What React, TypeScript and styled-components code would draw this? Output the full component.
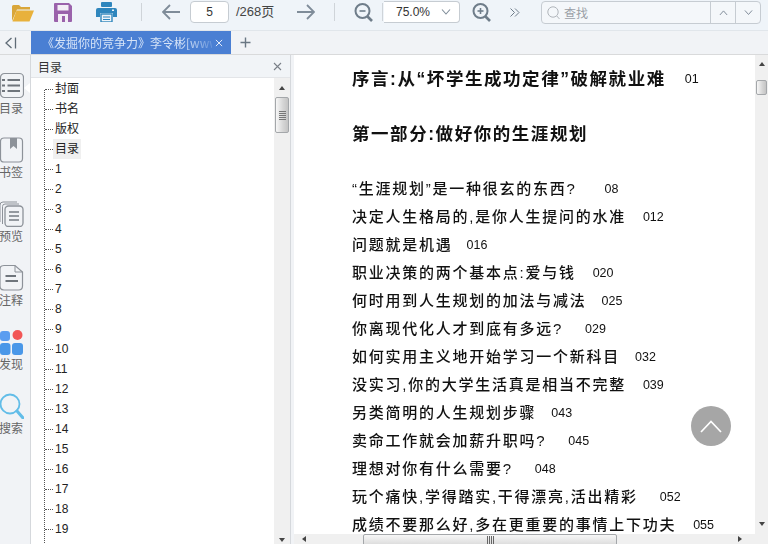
import React from "react";
import styled, { createGlobalStyle } from "styled-components";

const Global = createGlobalStyle`
  html, body { margin: 0; padding: 0; background: #f1f3f6; }
  body { font-family: "Liberation Sans", "Noto Sans CJK SC", sans-serif; overflow: hidden; }
  * { box-sizing: border-box; }
`;

const Page = styled.div`
  width: 768px; height: 544px; display: flex; flex-direction: column; overflow: hidden; position: relative;
`;
const Toolbar = styled.div`
  height: 30px; flex: none; background: #eff4f9; display: flex; align-items: flex-start; position: relative;
`;
const ToolIcon = styled.span<{ $l: number; $w: number }>`
  display: flex; align-items: center; justify-content: center; flex: none; height: 24px;
  margin-left: ${p => p.$l}px; width: ${p => p.$w}px;
`;
const Sep = styled.span<{ $l: number }>`
  flex: none; width: 1px; height: 18px; margin-top: 3px; margin-left: ${p => p.$l}px; background: #cfd4d9;
`;
const PageInput = styled.div`
  flex: none; width: 39px; height: 22px; margin: 1px 0 0 10px; background: #fff; border: 1px solid #c6ccd2; border-radius: 4px;
  font-size: 12px; color: #333; display: flex; align-items: center; justify-content: center;
`;
const PageTotal = styled.span`
  flex: none; width: 38px; margin: 4px 0 0 7px; font-size: 13px; line-height: 15px; color: #444; white-space: nowrap;
  font-family: "Liberation Sans", "Noto Sans CJK SC", sans-serif;
`;
const ZoomSelect = styled.div`
  flex: none; width: 76px; height: 22px; margin: 1px 0 0 1px; background: #fff; border: 1px solid #c6ccd2; border-radius: 0 4px 4px 0;
  border-left: none; font-size: 12px; color: #333; display: flex; align-items: center; padding-left: 12px; justify-content: space-between; padding-right: 8px;
`;
const SearchBox = styled.div`
  flex: none; width: 220px; height: 23px; margin: 1px 0 0 21px; border: 1px solid #c6ccd2; border-radius: 4px;
  background: #f4f7fa; display: flex; align-items: stretch;
`;
const SearchField = styled.div`
  flex: 1; display: flex; align-items: center; gap: 4px; padding-left: 5px; font-size: 12px; color: #9a9fa6;
`;
const SearchBtn = styled.div`
  flex: none; width: 25px; border-left: 1px solid #c6ccd2; display: flex; align-items: center; justify-content: center;
`;

const TabBar = styled.div`
  height: 25px; flex: none; background: #f1f3f6; border-top: 1px solid #e1e6eb; border-bottom: 1px solid #d9dadb; display: flex; align-items: stretch;
`;
const Collapse = styled.div`
  width: 31px; flex: none; display: flex; align-items: center; padding-left: 5px;
`;
const Tab = styled.div`
  width: 200px; flex: none; background: #4a7fd3; display: flex; align-items: center; padding-left: 11px; color: #d5e3f7;
  font-size: 12px; font-family: "Noto Sans CJK SC", sans-serif;
`;
const TabTitle = styled.span`
  width: 170px; overflow: hidden; white-space: nowrap; flex: none;
  -webkit-mask-image: linear-gradient(to right, #000 84%, rgba(0,0,0,.2) 100%);
  mask-image: linear-gradient(to right, #000 84%, rgba(0,0,0,.2) 100%);
`;
const TabClose = styled.span`
  display: flex; margin-left: 3px;
`;
const Plus = styled.div`
  margin-left: 9px; display: flex; align-items: center;
`;

const Body = styled.div`
  flex: 1; display: flex; min-height: 0; background: #f1f3f6;
`;
const Rail = styled.div`
  width: 31px; flex: none; border-right: 1px solid #d5d8dc; background: #f1f3f6; overflow: hidden; position: relative;
  display: flex; flex-direction: column; padding-top: 17px;
`;
const RailItem = styled.div`
  width: 22px; height: 64px; flex: none; display: flex; flex-direction: column; align-items: center;
`;
const RailIconBox = styled.div`
  width: 26px; height: 27px; flex: none; display: flex; align-items: center; justify-content: center;
`;
const RailLabel = styled.span`
  font-size: 12px; line-height: 16px; margin-top: 1px; color: #666; white-space: nowrap; font-family: "Noto Sans CJK SC", sans-serif;
`;
const Notch = styled.span`
  position: absolute; right: 0; top: 28px; width: 0; height: 0;
  border-top: 5px solid transparent; border-bottom: 5px solid transparent; border-right: 6px solid #fff;
`;

const Panel = styled.div`
  width: 260px; flex: none; display: flex; flex-direction: column; background: #fff; border-right: 1px solid #d5d8dc;
`;
const PanelHead = styled.div`
  height: 23px; flex: none; background: #f1f4f7; border-bottom: 1px solid #e3e5e8; display: flex; align-items: center; justify-content: space-between;
  padding: 0 8px 0 7px; font-size: 12px; color: #333; font-family: "Noto Sans CJK SC", sans-serif;
`;
const PanelBody = styled.div`
  flex: 1; display: flex; min-height: 0;
`;
const Tree = styled.div`
  flex: 1; padding: 1px 0 0 13px; overflow: hidden;
`;
const TreeList = styled.div`
  border-left: 1px dotted #555; position: relative; height: 480px;
  &::before { content: ""; position: absolute; left: -1px; top: 0; width: 1px; height: 10px; background: #fff; }
`;
const TreeRow = styled.div`
  height: 20px; display: flex; align-items: center;
`;
const Dash = styled.span`
  width: 8px; flex: none; border-top: 1px dotted #555;
`;
const TreeLabel = styled.span<{ $sel?: boolean }>`
  padding: 0 2px; height: 20px; line-height: 20px; font-size: 12px; color: #222;
  font-family: "Liberation Sans", "Noto Sans CJK SC", sans-serif; background: ${p => (p.$sel ? "#f0f0f0" : "transparent")};
`;
const VBar = styled.div`
  width: 16px; flex: none; background: #f0f0f0; display: flex; flex-direction: column; align-items: center; position: relative;
  justify-content: space-between; padding: 8px 0 2px;
`;
const Thumb = styled.span<{ $top: number; $h: number }>`
  position: absolute; left: 1px; right: 1px; top: ${p => p.$top}px; height: ${p => p.$h}px; border: 1px solid #a4a7aa; border-radius: 2px;
  background: linear-gradient(to right, #f7f7f7, #d5d5d5 60%, #c4c4c4); display: flex; align-items: center; justify-content: center;
`;
const Grip = styled.span`
  width: 7px; height: 9px;
  background: repeating-linear-gradient(to bottom, #777 0 1px, transparent 1px 2px);
`;
const ArrowUp = styled.span`
  width: 0; height: 0; border-left: 3.5px solid transparent; border-right: 3.5px solid transparent; border-bottom: 4px solid #444;
`;
const ArrowDown = styled.span`
  width: 0; height: 0; border-left: 3.5px solid transparent; border-right: 3.5px solid transparent; border-top: 4px solid #444;
`;
const ArrowLeft = styled.span`
  width: 0; height: 0; border-top: 3.5px solid transparent; border-bottom: 3.5px solid transparent; border-right: 4px solid #444;
`;
const ArrowRight = styled.span`
  width: 0; height: 0; border-top: 3.5px solid transparent; border-bottom: 3.5px solid transparent; border-left: 4px solid #444;
`;

const Viewer = styled.div`
  flex: 1; margin-left: 3px; display: flex; flex-direction: column; min-width: 0;
`;
const ViewerTop = styled.div`
  flex: 1; display: flex; min-height: 0;
`;
const Sheet = styled.div`
  flex: 1; background: #fff; padding: 8px 0 0 58px; overflow: hidden; color: #111; filter: blur(0.35px);
  font-family: "Liberation Sans", "Noto Sans CJK SC", sans-serif; min-width: 0;
`;
const Heading = styled.div`
  height: 28px; margin-bottom: 27px; display: flex; align-items: center; font-size: 17.5px; font-weight: 700; letter-spacing: 1.55px; white-space: nowrap;
`;
const Entry = styled.div`
  height: 28px; display: flex; align-items: center; font-size: 15px; font-weight: 500; letter-spacing: 1.75px; white-space: nowrap;
`;
const Num = styled.span<{ $gap: number }>`
  font-family: "Liberation Sans", sans-serif; font-size: 12.5px; font-weight: 400; letter-spacing: 0; margin-left: ${p => p.$gap}px; margin-top: 4px;
`;
const MainBar = styled.div`
  width: 13px; flex: none; background: #f0f0f0; display: flex; flex-direction: column; align-items: center; justify-content: space-between; padding: 7px 0 8px; position: relative;
`;
const HBar = styled.div`
  height: 10px; flex: none; background: #f0f0f0; display: flex; align-items: center; justify-content: space-between; padding: 0 26px 0 8px; position: relative; overflow: hidden;
`;
const HThumb = styled.span`
  position: absolute; left: 69px; top: 0; width: 254px; height: 16px; border: 1px solid #a4a7aa; border-radius: 2px;
  background: linear-gradient(to bottom, #f7f7f7, #d0d0d0); display: flex; justify-content: center; padding-top: 1px;
`;
const HGrip = styled.span`
  width: 7px; height: 8px; background: repeating-linear-gradient(to right, #666 0 1px, transparent 1px 2px);
`;
const TopButton = styled.div`
  position: absolute; left: 691px; top: 406px; width: 40px; height: 40px; border-radius: 50%; background: #a6a6a6; display: flex; align-items: center; justify-content: center;
`;

const chev = "#7f8c99";
const FolderIcon = () => (
  <svg width="24" height="21" viewBox="0 0 24 21">
    <path d="M1 4.5 Q1 3 2.5 3 H8 L10 5 H19 V7.5 H6 L1 19 Z" fill="#d9a63a" />
    <path d="M5.5 8.5 H23 L18.5 19.5 H1.5 Z" fill="#e8b13c" />
  </svg>
);
const SaveIcon = () => (
  <svg width="18" height="19" viewBox="0 0 18 19">
    <path d="M1 0 H15 L18 3 V18 a1 1 0 0 1 -1 1 H1 a1 1 0 0 1 -1 -1 V1 a1 1 0 0 1 1 -1 Z" fill="#9a62ab" />
    <rect x="3.5" y="2" width="11" height="5.5" fill="#f3eef6" />
    <rect x="4" y="11" width="10" height="8" fill="#f3eef6" />
    <rect x="8" y="13" width="3" height="6" fill="#9a62ab" />
  </svg>
);
const PrintIcon = () => (
  <svg width="21" height="20" viewBox="0 0 21 20">
    <rect x="5" y="0" width="11" height="5" rx="1" fill="#2f86bd" />
    <path d="M2 6 H19 a2 2 0 0 1 2 2 V15 H17 V11 H4 V15 H0 V8 a2 2 0 0 1 2 -2 Z" fill="#2f86bd" />
    <rect x="5" y="12" width="11" height="8" fill="none" stroke="#2f86bd" strokeWidth="1.4" />
    <path d="M7 15 H14 M7 17.5 H14" stroke="#2f86bd" strokeWidth="1" />
    <rect x="16" y="7.5" width="2" height="1.5" fill="#eaf3f8" />
  </svg>
);
const ArrowBack = () => (
  <svg width="18" height="16" viewBox="0 0 18 16" fill="none" stroke="#7f8c99" strokeWidth="1.8">
    <path d="M0.5 8 H18 M8 1 L1 8 L8 15" />
  </svg>
);
const ArrowFwd = () => (
  <svg width="18" height="16" viewBox="0 0 18 16" fill="none" stroke="#7f8c99" strokeWidth="1.8">
    <path d="M17.5 8 H0 M10 1 L17 8 L10 15" />
  </svg>
);
const ZoomIcon = ({ plus }: { plus?: boolean }) => (
  <svg width="19" height="19" viewBox="0 0 19 19" fill="none" stroke="#6f7d8a" strokeWidth="2">
    <circle cx="8.5" cy="8" r="7" />
    <path d="M13.5 13.5 L18 18" strokeWidth="2.6" />
    <path d="M5.5 8 H11.5" strokeWidth="1.6" />
    {plus && <path d="M8.5 5 V11" strokeWidth="1.6" />}
  </svg>
);
const Chevron = ({ up, size = 10, color = chev }: { up?: boolean; size?: number; color?: string }) => (
  <svg width={size} height={size * 0.6} viewBox="0 0 10 6" fill="none" stroke={color} strokeWidth="1.1">
    <path d={up ? "M1 5.5 L5 1 L9 5.5" : "M1 .5 L5 5 L9 .5"} />
  </svg>
);
const More = () => (
  <svg width="10" height="9" viewBox="0 0 10 9" fill="none" stroke="#6f7d8a" strokeWidth="1">
    <path d="M0.5 .5 L4.5 4.5 L.5 8.5 M5 .5 L9 4.5 L5 8.5" />
  </svg>
);
const SearchGlyph = () => (
  <svg width="13" height="14" viewBox="0 0 13 14" fill="none" stroke="#b0b5bb" strokeWidth="1">
    <circle cx="6" cy="6" r="5.2" />
    <path d="M9.8 10 L12.5 13" />
  </svg>
);
const CollapseIcon = () => (
  <svg width="12" height="12" viewBox="0 0 12 12" fill="none" stroke="#5f6b76" strokeWidth="1.3">
    <path d="M6.5 1 L1 6 L6.5 11 M10.5 0.5 V11.5" />
  </svg>
);
const Cross = ({ color, size = 9 }: { color: string; size?: number }) => (
  <svg width={size} height={size} viewBox="0 0 9 9" fill="none" stroke={color} strokeWidth="1.1">
    <path d="M1 1 L8 8 M8 1 L1 8" />
  </svg>
);
const PlusIcon = () => (
  <svg width="11" height="11" viewBox="0 0 11 11" fill="none" stroke="#6a7783" strokeWidth="1.4">
    <path d="M5.5 0.5 V10.5 M0.5 5.5 H10.5" />
  </svg>
);

const g = "#8d9299";
const TocIcon = () => (
  <svg width="26" height="27" viewBox="0 0 26 27" fill="none" stroke={g}>
    <rect x="2.5" y="1.5" width="23" height="24" rx="4" strokeWidth="1.2" />
    <path d="M9.5 8 H22 M9.5 13.5 H22 M9.5 19 H22" strokeWidth="1.8" stroke="#6f757c" />
    <path d="M4 8 H7 M4 13.5 H7 M4 19 H7" strokeWidth="1.8" stroke="#6f757c" />
  </svg>
);
const BookmarkIcon = () => (
  <svg width="26" height="27" viewBox="0 0 26 27" fill="none" stroke={g}>
    <rect x="2.5" y="2" width="22" height="24" rx="3.5" strokeWidth="1.2" />
    <path d="M12 2 H19 V13 L15.5 10 L12 13 Z" fill="#8d9299" stroke="none" />
  </svg>
);
const PreviewIcon = () => (
  <svg width="26" height="27" viewBox="0 0 26 27" fill="none" stroke={g}>
    <path d="M2 22 V5 Q2 2 5 2 H19" strokeWidth="1" />
    <path d="M4.5 24 V6.5 Q4.5 4 7 4 H21" strokeWidth="1" />
    <rect x="7" y="6" width="18" height="20.5" rx="3.5" strokeWidth="1.3" fill="#f1f3f6" />
    <path d="M11 12 H21 M11 16 H21 M11 20 H21" strokeWidth="1.6" stroke="#777d84" />
  </svg>
);
const NoteIcon = () => (
  <svg width="26" height="27" viewBox="0 0 26 27" fill="none" stroke={g}>
    <path d="M6 1.5 H17 L24.5 8 V22 Q24.5 26 20.5 26 H6 Q2 26 2 22 V5 Q2 1.5 6 1.5 Z" strokeWidth="1.2" />
    <path d="M17 1.5 V8 H24.5" strokeWidth="1" />
    <path d="M7.5 12 H18 M7.5 17 H20" strokeWidth="1.8" stroke="#6f757c" />
  </svg>
);
const DiscoverIcon = () => (
  <svg width="26" height="27" viewBox="0 0 26 27">
    <rect x="2" y="3" width="10" height="10" rx="3" fill="#5b9df0" />
    <circle cx="19.5" cy="7" r="5" fill="#f25656" />
    <rect x="2" y="15" width="10.5" height="12" rx="3" fill="#4a97e8" />
    <rect x="14" y="15" width="11" height="12" rx="3" fill="#4a97e8" />
  </svg>
);
const SearchRailIcon = () => (
  <svg width="26" height="27" viewBox="0 0 26 27" fill="none" stroke="#62bde8">
    <circle cx="12" cy="12" r="9.5" strokeWidth="1.8" />
    <path d="M19 19 L25 26" strokeWidth="3" strokeLinecap="round" />
  </svg>
);

const rail: [React.ReactNode, string][] = [
  [<TocIcon />, "目录"],
  [<BookmarkIcon />, "书签"],
  [<PreviewIcon />, "预览"],
  [<NoteIcon />, "注释"],
  [<DiscoverIcon />, "发现"],
  [<SearchRailIcon />, "搜索"],
];

const tree = ["封面", "书名", "版权", "目录", ...Array.from({ length: 19 }, (_, i) => String(i + 1))];

const entries: [string, string, number][] = [
  ["“生涯规划”是一种很玄的东西?", "08", 28],
  ["决定人生格局的,是你人生提问的水准", "012", 17],
  ["问题就是机遇", "016", 14],
  ["职业决策的两个基本点:爱与钱", "020", 17],
  ["何时用到人生规划的加法与减法", "025", 15],
  ["你离现代化人才到底有多远?", "029", 22],
  ["如何实用主义地开始学习一个新科目", "032", 15],
  ["没实习,你的大学生活真是相当不完整", "039", 17],
  ["另类简明的人生规划步骤", "043", 15],
  ["卖命工作就会加薪升职吗?", "045", 22],
  ["理想对你有什么需要?", "048", 22],
  ["玩个痛快,学得踏实,干得漂亮,活出精彩", "052", 22],
  ["成绩不要那么好,多在更重要的事情上下功夫", "055", 17],
];

export default function App() {
  return (
    <Page>
      <Global />
      <Toolbar>
        <ToolIcon $l={11} $w={24}><FolderIcon /></ToolIcon>
        <ToolIcon $l={19} $w={18}><SaveIcon /></ToolIcon>
        <ToolIcon $l={24} $w={21}><PrintIcon /></ToolIcon>
        <Sep $l={24} />
        <ToolIcon $l={20} $w={18}><ArrowBack /></ToolIcon>
        <PageInput>5</PageInput>
        <PageTotal>/268页</PageTotal>
        <ToolIcon $l={23} $w={18}><ArrowFwd /></ToolIcon>
        <Sep $l={19} />
        <ToolIcon $l={19} $w={19}><ZoomIcon /></ToolIcon>
        <Sep $l={9} />
        <ZoomSelect>75.0%<Chevron size={10} /></ZoomSelect>
        <ToolIcon $l={12} $w={19}><ZoomIcon plus /></ToolIcon>
        <ToolIcon $l={19} $w={10}><More /></ToolIcon>
        <SearchBox>
          <SearchField><SearchGlyph />查找</SearchField>
          <SearchBtn><Chevron up size={9} /></SearchBtn>
          <SearchBtn><Chevron size={9} /></SearchBtn>
        </SearchBox>
      </Toolbar>
      <TabBar>
        <Collapse><CollapseIcon /></Collapse>
        <Tab>
          <TabTitle>《发掘你的竞争力》李令彬[www</TabTitle>
          <TabClose><Cross color="#e6eefa" size={8} /></TabClose>
        </Tab>
        <Plus><PlusIcon /></Plus>
      </TabBar>
      <Body>
        <Rail>
          <Notch />
          {rail.map(([icon, label]) => (
            <RailItem key={label}>
              <RailIconBox>{icon}</RailIconBox>
              <RailLabel>{label}</RailLabel>
            </RailItem>
          ))}
        </Rail>
        <Panel>
          <PanelHead>目录<Cross color="#7a8088" /></PanelHead>
          <PanelBody>
            <Tree>
              <TreeList>
                {tree.map(t => (
                  <TreeRow key={t}>
                    <Dash />
                    <TreeLabel $sel={t === "目录"}>{t}</TreeLabel>
                  </TreeRow>
                ))}
              </TreeList>
            </Tree>
            <VBar>
              <ArrowUp />
              <Thumb $top={19} $h={36}><Grip /></Thumb>
              <ArrowDown />
            </VBar>
          </PanelBody>
        </Panel>
        <Viewer>
          <ViewerTop>
            <Sheet>
              <Heading>序言:从“坏学生成功定律”破解就业难<Num $gap={19}>01</Num></Heading>
              <Heading>第一部分:做好你的生涯规划</Heading>
              {entries.map(([t, n, gap]) => (
                <Entry key={n}>{t}<Num $gap={gap}>{n}</Num></Entry>
              ))}
            </Sheet>
            <MainBar>
              <ArrowUp />
              <Thumb $top={25} $h={15} />
              <ArrowDown />
            </MainBar>
          </ViewerTop>
          <HBar>
            <ArrowLeft />
            <HThumb><HGrip /></HThumb>
            <ArrowRight />
          </HBar>
        </Viewer>
      </Body>
      <TopButton>
        <svg width="22" height="13" viewBox="0 0 22 13" fill="none" stroke="#fff" strokeWidth="1.7">
          <path d="M1 12 L11 1.5 L21 12" />
        </svg>
      </TopButton>
    </Page>
  );
}
